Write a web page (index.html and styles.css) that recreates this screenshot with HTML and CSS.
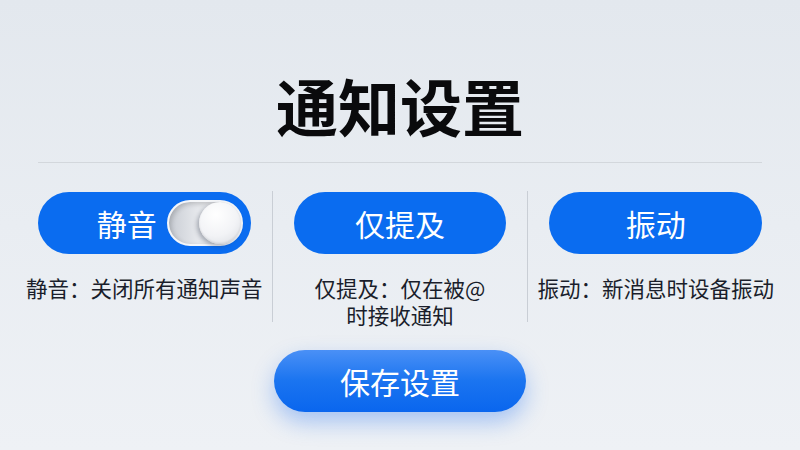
FILE: index.html
```html
<!DOCTYPE html>
<html lang="zh-CN">
<head>
<meta charset="utf-8">
<link rel="stylesheet" href="styles.css">
</head>
<body>
<div class="page">
  <h1 class="title">通知设置</h1>
  <div class="rule"></div>
  <div class="options">
    <div class="opt">
      <div class="btn btn-mute">
        <span class="btn-label">静音</span>
        <span class="toggle"><span class="knob"></span></span>
      </div>
      <p class="desc">静音：关闭所有通知声音</p>
    </div>
    <div class="vline"></div>
    <div class="opt">
      <div class="btn">仅提及</div>
      <p class="desc"><span class="ln">仅提及：仅在被@</span><span class="ln">时接收通知</span></p>
    </div>
    <div class="vline"></div>
    <div class="opt">
      <div class="btn">振动</div>
      <p class="desc">振动：新消息时设备振动</p>
    </div>
  </div>
  <div class="save-row">
    <div class="save">保存设置</div>
  </div>
</div>
</body>
</html>
```
FILE: styles.css
```css
html, body {
  margin: 0;
  padding: 0;
}
body {
  width: 800px;
  height: 450px;
  overflow: hidden;
  background: linear-gradient(180deg, #e3e8ee 0%, #e9edf2 50%, #eef1f5 100%);
  font-family: "Noto Sans CJK SC", "Noto Sans", sans-serif;
}
.page {
  height: 450px;
  box-sizing: border-box;
  padding: 0 38px;
  display: flex;
  flex-direction: column;
}
.title {
  margin: 74px 0 0;
  font-size: 62px;
  line-height: 62px;
  font-weight: 700;
  color: #0a0a0c;
  text-align: center;
}
.rule {
  margin-top: 26px;
  height: 1px;
  background: #d3d7dc;
}
.options {
  margin-top: 29px;
  display: grid;
  grid-template-columns: 1fr 1px 1fr 1px 1fr;
  column-gap: 21px;
}
.vline {
  background: #c9ced5;
  margin-top: -1px;
  margin-bottom: 6px;
}
.opt {
  display: flex;
  flex-direction: column;
  align-items: center;
}
.btn {
  width: 100%;
  height: 62px;
  border-radius: 31px;
  background: #0a6cf0;
  color: #fff;
  font-size: 30px;
  display: flex;
  align-items: center;
  justify-content: center;
  box-sizing: border-box;
}
.btn-mute {
  justify-content: flex-end;
  padding-right: 8px;
  gap: 10px;
}
.toggle {
  position: relative;
  width: 76px;
  height: 46px;
  box-sizing: border-box;
  border-radius: 23px;
  border: 2px solid #f4f6f9;
  background: linear-gradient(90deg, #c9cdd4 0%, #e6e8ec 40%, #eef0f3 100%);
  box-shadow: inset 2px 2px 5px rgba(0,0,0,0.18);
}
.knob {
  position: absolute;
  right: 0;
  top: 0;
  width: 42px;
  height: 42px;
  border-radius: 50%;
  background: radial-gradient(circle at 40% 30%, #ffffff 0%, #f2f3f6 55%, #d8dbe1 100%);
  box-shadow: -2px 2px 4px rgba(40,50,70,0.35), inset 0 -1px 2px rgba(0,0,0,0.1);
}
.desc {
  margin: 20px -20px 0;
  font-size: 21.5px;
  line-height: 27px;
  color: #1a1e2b;
  text-align: center;
  white-space: nowrap;
}
.ln {
  display: block;
  height: 27px;
}
.save-row {
  margin-top: 22px;
  display: flex;
  justify-content: center;
}
.save {
  width: 252px;
  height: 62px;
  border-radius: 31px;
  background: linear-gradient(180deg, #4a90f6 0%, #1a74f0 50%, #0a66ee 100%);
  color: #fff;
  font-size: 30px;
  display: flex;
  align-items: center;
  justify-content: center;
  box-shadow: 0 10px 22px rgba(30, 110, 240, 0.35);
}
```
